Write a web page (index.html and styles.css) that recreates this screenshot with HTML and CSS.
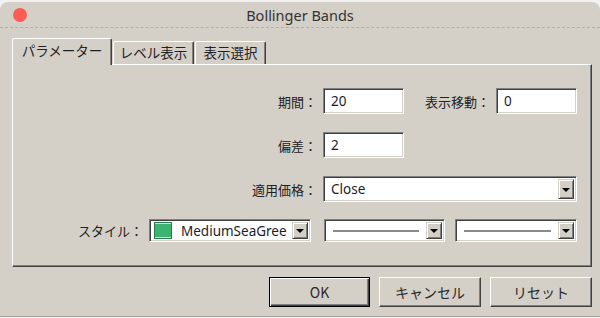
FILE: index.html
```html
<!DOCTYPE html>
<html lang="ja">
<head>
<meta charset="utf-8">
<title>Bollinger Bands</title>
<link rel="stylesheet" href="styles.css">
</head>
<body>
<div class="window">
  <div class="titlebar">
    <span class="close-dot"></span>
    <span class="title">Bollinger Bands</span>
  </div>
  <div class="tabs">
    <div class="tab active">パラメーター</div>
    <div class="tab t2">レベル表示</div>
    <div class="tab t3">表示選択</div>
  </div>
  <div class="panel">
    <div class="row r1">
      <label class="lbl w-main">期間：</label>
      <div class="field num">20</div>
      <label class="lbl w-shift">表示移動：</label>
      <div class="field num">0</div>
    </div>
    <div class="row r2">
      <label class="lbl w-main">偏差：</label>
      <div class="field num">2</div>
    </div>
    <div class="row r3">
      <label class="lbl w-main">適用価格：</label>
      <div class="field combo wide">
        <span class="value">Close</span>
        <span class="drop"><span class="arrow"></span></span>
      </div>
    </div>
    <div class="row r4">
      <label class="lbl w-style">スタイル：</label>
      <div class="field combo c-color">
        <span class="swatch"></span>
        <span class="value">MediumSeaGree</span>
        <span class="drop"><span class="arrow"></span></span>
      </div>
      <div class="field combo c-line">
        <span class="line"></span>
        <span class="drop"><span class="arrow"></span></span>
      </div>
      <div class="field combo c-line c-last">
        <span class="line"></span>
        <span class="drop"><span class="arrow"></span></span>
      </div>
    </div>
  </div>
  <div class="buttons">
    <button class="btn default">OK</button>
    <button class="btn">キャンセル</button>
    <button class="btn">リセット</button>
  </div>
</div>
</body>
</html>
```
FILE: styles.css
```css
* { box-sizing: border-box; }
html, body {
  margin: 0;
  padding: 0;
  background: #f2f2f2;
  width: 600px;
  height: 318px;
  overflow: hidden;
}
body {
  font-family: "Noto Sans", "Noto Sans CJK JP", sans-serif;
  font-size: 13px;
  color: #222;
}
.window {
  margin-top: 2px;
  height: 315px;
  background: #d4d0c8;
  border-radius: 8px 8px 0 0;
  border-bottom: 1px solid #a6a39c;
  display: flex;
  flex-direction: column;
}
.titlebar {
  height: 26px;
  border-bottom: 1px dashed #b3afa7;
  display: flex;
  align-items: center;
  justify-content: center;
  position: relative;
}
.close-dot {
  position: absolute;
  left: 13px;
  top: 6px;
  width: 14px;
  height: 14px;
  border-radius: 50%;
  background: #fd5b55;
}
.title {
  font-family: "Noto Sans", sans-serif;
  font-size: 14.5px;
  color: #333;
  margin-top: 1px;
}
.tabs {
  display: flex;
  align-items: flex-end;
  padding-left: 12px;
  padding-top: 9px;
  height: 36px;
  font-family: "Noto Sans CJK JP", sans-serif;
}
.tab {
  background: #d4d0c8;
  border-top: 1px solid #fff;
  border-left: 1px solid #fff;
  border-right: 1px solid #404040;
  box-shadow: inset -1px 0 #808080;
  border-radius: 2px 2px 0 0;
  height: 23px;
  display: flex;
  align-items: center;
  justify-content: center;
  font-size: 13.5px;
  color: #1f1f2a;
  line-height: 1;
}
.tab.active {
  width: 100px;
  height: 27px;
  margin-bottom: -1px;
  position: relative;
  z-index: 1;
  padding-bottom: 3px;
}
.tab.t2 { width: 81px; margin-left: 1px; }
.tab.t3 { width: 71px; margin-left: 1px; }
.panel {
  margin-left: 12px;
  width: 580px;
  height: 203px;
  border: 1px solid;
  border-color: #fff #404040 #404040 #fff;
  box-shadow: inset -1px -1px #808080;
  padding-top: 23px;
  font-family: "Noto Sans CJK JP", sans-serif;
}
.row {
  display: flex;
  align-items: center;
}
.r2 { margin-top: 18px; }
.r3 { margin-top: 18px; }
.r4 { margin-top: 17px; }
.lbl {
  text-align: right;
  padding-right: 6px;
  white-space: nowrap;
  color: #222;
}
.w-main { width: 310px; }
.w-shift { width: 92px; }
.w-style { width: 136px; }
.field {
  background: #fff;
  border: 1px solid;
  border-color: #808080 #fff #fff #808080;
  box-shadow: inset 1px 1px #404040, inset -1px -1px #d4d0c8;
  font-family: "Noto Sans", sans-serif;
  font-size: 13.5px;
  color: #1c1c2c;
  display: flex;
  align-items: center;
}
.num {
  width: 81px;
  height: 26px;
  padding-left: 7px;
}
.combo {
  height: 26px;
  padding: 2px;
}
.combo .value { flex: 1; padding-left: 5px; white-space: nowrap; overflow: hidden; }
.wide { width: 254px; }
.drop {
  width: 16px;
  height: 100%;
  background: #d4d0c8;
  border: 1px solid;
  border-color: #d4d0c8 #404040 #404040 #d4d0c8;
  box-shadow: inset 1px 1px #fff, inset -1px -1px #808080;
  display: flex;
  align-items: center;
  justify-content: center;
  flex: none;
}
.arrow {
  width: 0;
  height: 0;
  border-left: 4px solid transparent;
  border-right: 4px solid transparent;
  border-top: 4px solid #000;
  margin-top: 1px;
}
.r4 .combo { height: 23px; }
.c-color { width: 162px; }
.swatch {
  width: 18px;
  height: 17px;
  margin-left: 2px;
  background: #3cb371;
  border: 1px solid #2d7a52;
  box-shadow: inset 0 1px #bfe5cf, inset 0 -1px #bfe5cf;
  flex: none;
}
.c-color .value { padding-left: 9px; }
.c-line { width: 121px; margin-left: 13px; }
.c-last { width: 122px; margin-left: 10px; }
.line {
  flex: 1;
  height: 2px;
  background: #8a8a8a;
  margin: 0 7px 0 6px;
}
.buttons {
  display: flex;
  justify-content: flex-end;
  gap: 9px;
  padding-right: 8px;
  margin-top: 10px;
}
.btn {
  width: 102px;
  height: 30px;
  background: #d4d0c8;
  border: 1px solid;
  border-color: #fff #404040 #404040 #fff;
  box-shadow: inset -1px -1px #808080;
  font-family: "Noto Sans CJK JP", sans-serif;
  font-size: 14px;
  color: #2a2a2a;
  padding: 0;
}
.btn.default {
  border: 1px solid #000;
  box-shadow: inset 1px 1px #fff, inset -1px -1px #404040, inset -2px -2px #808080;
  width: 101px;
}
```
